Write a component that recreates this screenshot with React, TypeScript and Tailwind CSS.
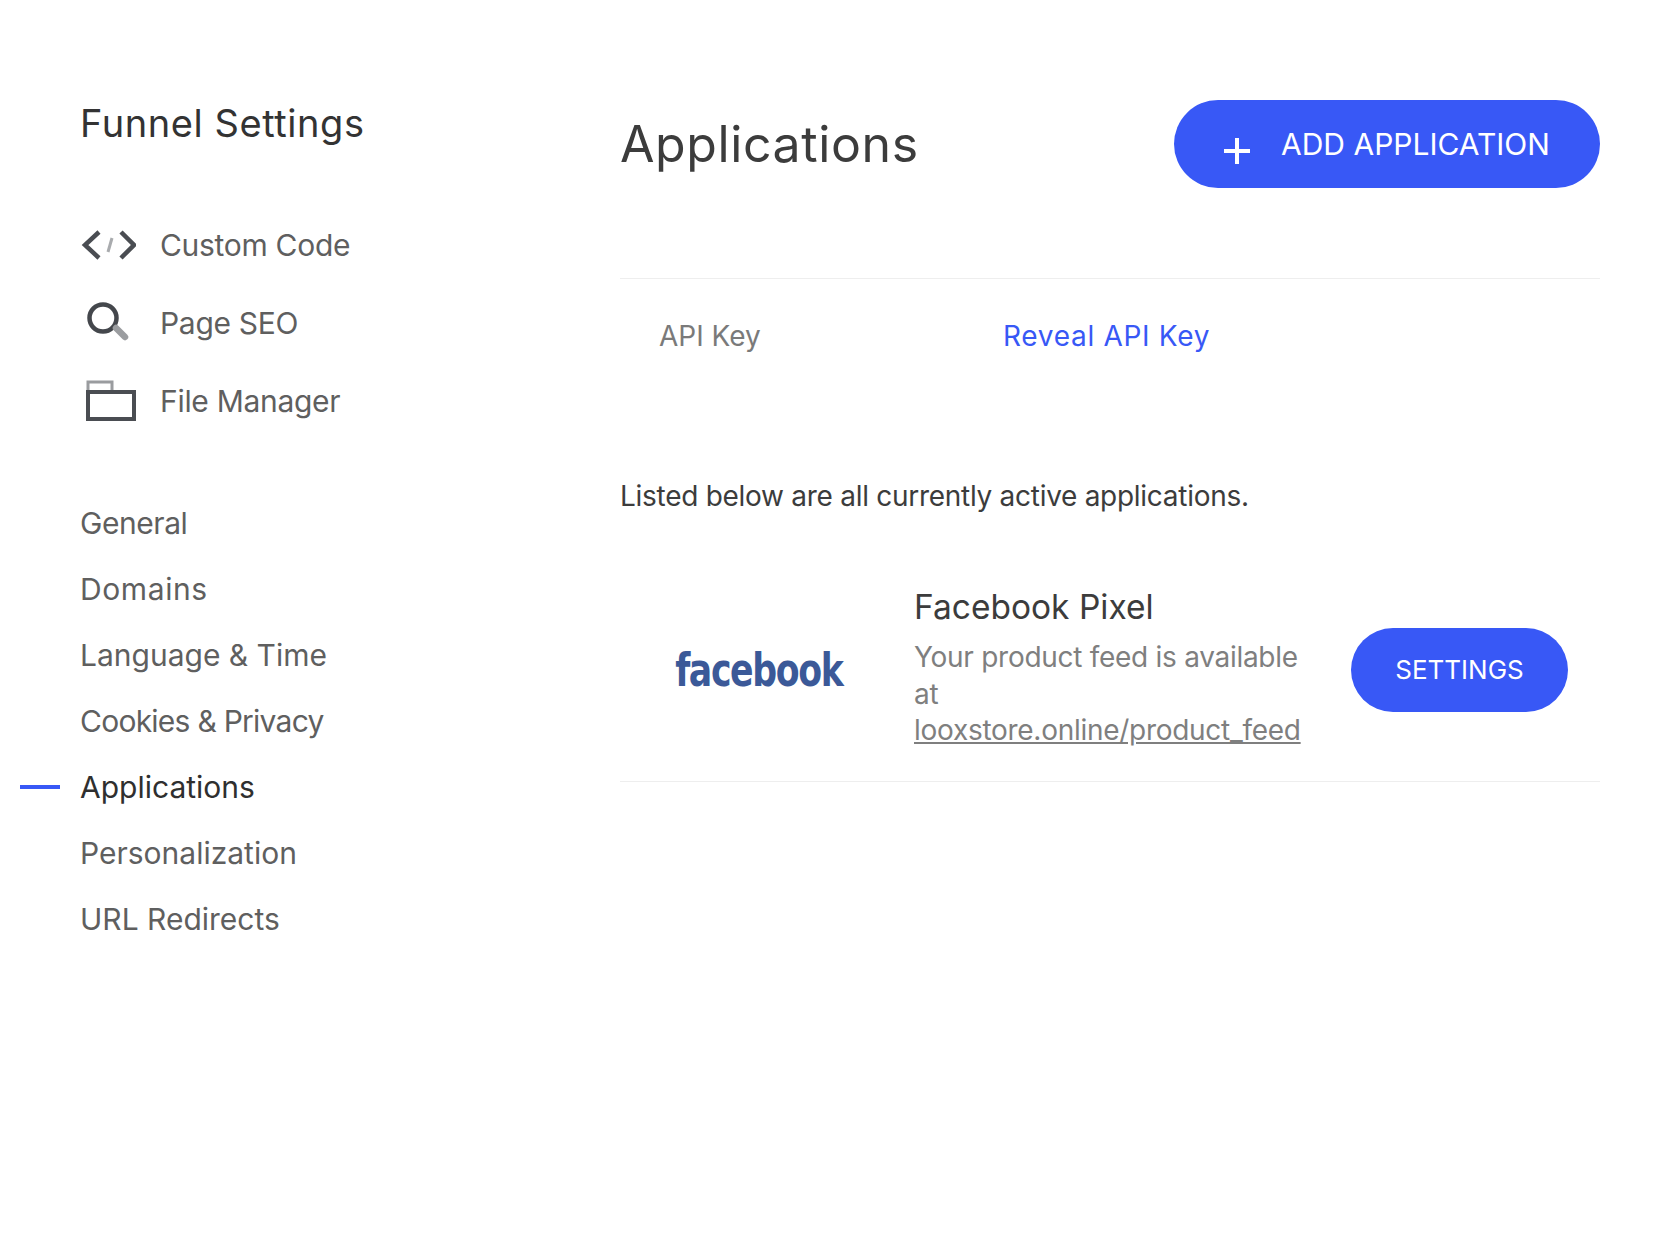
const font = { fontFamily: 'Inter, "Open Sans", sans-serif' }

const toolLinks = [
  { label: 'Custom Code', icon: <CodeIcon /> },
  { label: 'Page SEO', icon: <SearchIcon /> },
  { label: 'File Manager', icon: <FolderIcon /> },
]

const navLinks = [
  { label: 'General', fit: 'tracking-[-0.015em]' },
  { label: 'Domains', fit: 'tracking-[0.02em]' },
  { label: 'Language & Time', fit: '' },
  { label: 'Cookies & Privacy', fit: 'tracking-[-0.025em]' },
  { label: 'Applications', fit: '' },
  { label: 'Personalization', fit: '' },
  { label: 'URL Redirects', fit: '' },
]

function CodeIcon() {
  return (
    <svg width="56" height="32" viewBox="0 0 56 32" fill="none" strokeWidth="4.5">
      <path d="M19 3 5 16l14 13" stroke="#4a4d52" />
      <path d="M41 3l13 13-13 13" stroke="#4a4d52" />
      <path d="M32 9l-4 14" stroke="#a9abae" strokeWidth="3" />
    </svg>
  )
}

function SearchIcon() {
  return (
    <svg width="56" height="44" viewBox="0 0 56 44" fill="none">
      <circle cx="23" cy="17" r="13.5" stroke="#44474c" strokeWidth="4.5" />
      <path d="M36 27l9 9" stroke="#9b9da0" strokeWidth="6.5" strokeLinecap="round" />
    </svg>
  )
}

function FolderIcon() {
  return (
    <svg width="56" height="44" viewBox="0 0 56 44" fill="none">
      <path d="M8 13V3h24v10" stroke="#9a9c9f" strokeWidth="3" />
      <rect x="8" y="13" width="46" height="27" stroke="#4a4d52" strokeWidth="4" />
    </svg>
  )
}

export default function App() {
  return (
    <div className="flex min-h-[1236px] bg-white text-[#3c3c3c]" style={font}>
      <aside className="w-[620px] shrink-0 pt-[98px]">
        <h2 className="pl-[80px] text-[38px] leading-[50px] font-normal tracking-[0.015em] text-[#333]">Funnel Settings</h2>

        <ul className="mt-[71px] flex flex-col gap-[26px] pl-[80px]">
          {toolLinks.map((item) => (
            <li key={item.label} className="flex h-[52px] items-center gap-[24px] text-[30px] tracking-[-0.01em] text-[#5f5f5f]">
              <span className="flex w-[56px] justify-center">{item.icon}</span>
              {item.label}
            </li>
          ))}
        </ul>

        <ul className="mt-[72px] flex flex-col gap-[18px]">
          {navLinks.map(({ label, fit }) => (
            <li
              key={label}
              className={`relative h-[48px] pl-[80px] text-[30px] leading-[48px] ${fit} ${label === 'Applications' ? 'text-[#2f2f2f]' : 'text-[#5f5f5f]'}`}
            >
              {label === 'Applications' && (
                <span className="absolute top-[22px] left-[20px] h-[4px] w-[40px] bg-[#3858f6]" />
              )}
              {label}
            </li>
          ))}
        </ul>
      </aside>

      <main className="w-[980px] pt-[100px]">
        <div className="flex h-[88px] items-center justify-between">
          <h1 className="text-[50px] font-normal tracking-[0.012em] text-[#3c3c3c]">Applications</h1>
          <button className="flex h-[88px] w-[426px] items-center rounded-full bg-[#3858f6] pl-[49px] text-[30px] text-white">
            <svg width="28" height="28" viewBox="0 0 28 28" className="mt-[14px] mr-[30px]">
              <path d="M14 1v26M1 14h26" stroke="white" strokeWidth="4" />
            </svg>
            ADD APPLICATION
          </button>
        </div>

        <div className="mt-[90px] flex h-[114px] items-center border-t border-[#eeeeee] pl-[39px] text-[28px]">
          <span className="w-[344px] text-[#7a7a7a]">API Key</span>
          <a className="tracking-[0.025em] text-[#3858f6]">Reveal API Key</a>
        </div>

        <p className="mt-[84px] text-[28px] leading-[40px] tracking-[-0.01em] text-[#3c3c3c]">Listed below are all currently active applications.</p>

        <div className="mt-[69px] flex items-center border-b border-[#eeeeee] pb-[32px]">
          <div className="mt-[6px] flex w-[294px] justify-center pr-[16px]">
            <span
              className="inline-block origin-center scale-x-[0.755] text-[46px] leading-none font-bold tracking-[-0.04em] text-[#3b5998]"
              style={{ fontFamily: '"DejaVu Sans", "Liberation Sans", sans-serif' }}
            >
              facebook
            </span>
          </div>
          <div className="w-[437px]">
            <h3 className="text-[33.5px] leading-[44px] font-normal text-[#3c3c3c]">Facebook Pixel</h3>
            <p className="mt-[10px] w-[400px] text-[28px] leading-[36.5px] tracking-[-0.01em] text-[#7f7f7f]">
              Your product feed is available at <span className="underline">looxstore.online/product_feed</span>
            </p>
          </div>
          <button className="mt-[6px] h-[84px] w-[217px] rounded-full bg-[#3858f6] text-[26px] text-white">SETTINGS</button>
        </div>
      </main>
    </div>
  )
}
